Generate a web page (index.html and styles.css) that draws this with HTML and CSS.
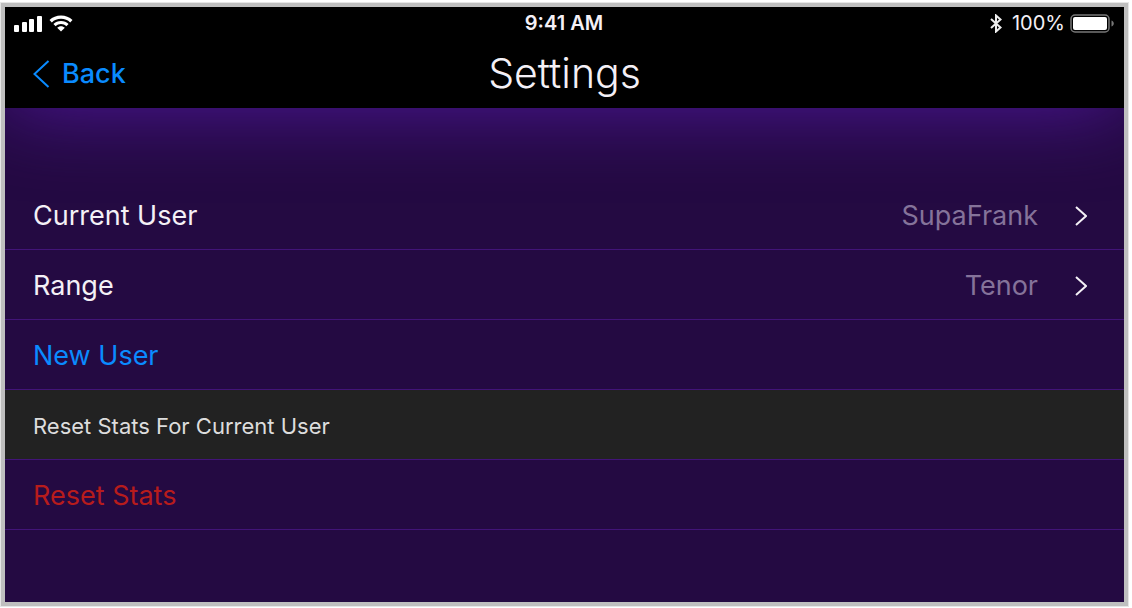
FILE: index.html
```html
<!DOCTYPE html>
<html lang="en">
<head>
<meta charset="utf-8">
<meta name="viewport" content="width=device-width, initial-scale=1">
<title>Settings</title>
<link rel="stylesheet" href="styles.css">
</head>
<body>
<div class="device">
  <header class="header">
    <div class="status">
      <div class="status-side">
        <svg class="signal" viewBox="0 0 28 17" aria-hidden="true"><rect x="0" y="10" width="5" height="7" rx="1"/><rect x="8" y="7" width="5" height="10" rx="1"/><rect x="15" y="4" width="5" height="13" rx="1"/><rect x="23" y="1" width="5" height="16" rx="1"/></svg>
        <svg class="wifi" viewBox="0 0 24 17" aria-hidden="true"><path d="M12 0.5C7.5 0.5 3.5 2.2 0.5 5L2.8 7.4C5.2 5 8.4 3.7 12 3.7S18.8 5 21.2 7.4L23.5 5C20.5 2.2 16.500 0.5 12 0.5Z"/><path d="M12 6C9 6 6.300 7.200 4.400 9L6.700 11.300C8.100 9.900 9.900 9.100 12 9.100S15.900 9.900 17.300 11.300L19.600 9C17.700 7.200 15 6 12 6Z"/><path d="M12 11.200C10.500 11.200 9.200 11.800 8.200 12.800L12 16.600L15.800 12.800C14.800 11.800 13.500 11.200 12 11.200Z"/></svg>
      </div>
      <time class="clock">9:41 AM</time>
      <div class="status-side status-right">
        <svg class="bluetooth" viewBox="0 0 12 19" aria-hidden="true"><path d="M1 5L10.500 13.500L6 17.500V1.500L10.500 5.500L1 14"/></svg>
        <span class="percent">100%</span>
        <svg class="battery" viewBox="0 0 44 19" aria-hidden="true"><rect class="battery-shell" x="1" y="1" width="38" height="17" rx="4"/><rect class="battery-level" x="3" y="3" width="34" height="13" rx="2"/><path class="battery-cap" d="M41.500 6.500C44.500 7.500 44.500 11.500 41.500 12.500Z"/></svg>
      </div>
    </div>
    <nav class="navbar">
      <a class="back" href="#"><svg class="back-icon" viewBox="0 0 17 28" aria-hidden="true"><path d="M15.500 1L1.500 14L15.500 27"/></svg>Back</a>
      <h1 class="title">Settings</h1>
    </nav>
  </header>
  <main class="list">
    <button class="row" type="button"><span>Current User</span><span class="value">SupaFrank</span><svg class="chevron" viewBox="0 0 12 20" aria-hidden="true"><path d="M1 1L11 10L1 19"/></svg></button>
    <button class="row" type="button"><span>Range</span><span class="value">Tenor</span><svg class="chevron" viewBox="0 0 12 20" aria-hidden="true"><path d="M1 1L11 10L1 19"/></svg></button>
    <button class="row action" type="button">New User</button>
    <h2 class="row section">Reset Stats For Current User</h2>
    <button class="row danger" type="button">Reset Stats</button>
  </main>
</div>
</body>
</html>
```
FILE: styles.css
```css
* { box-sizing: border-box; }

body {
  margin: 0;
  padding: 3px 4px 2px 1px;
  background: #fff;
  color: #f4f0f6;
  font-family: Inter, "Liberation Sans", sans-serif;
}

.device {
  min-height: calc(100vh - 5px);
  overflow: hidden;
  border: 4px solid #bfbfbf;
  background: #240a42;
  box-shadow: 0 0 0 1px #e6e6e6;
}

.header {
  background: #000;
  box-shadow: 0 0 80px #4e169a;
}

.status {
  display: grid;
  grid-template-columns: 1fr auto 1fr;
  align-items: center;
  height: 32px;
  padding: 0 10px 0 9px;
}

.status-side {
  display: flex;
  align-items: center;
  gap: 7px;
}

.status-right { gap: 5px; justify-content: flex-end; }

.signal { width: 28px; height: 17px; fill: #fff; }
.wifi { width: 24px; height: 17px; fill: #fff; }
.clock { font-size: 20px; font-weight: 600; line-height: 24px; }
.percent { margin-left: 5px; font-size: 20px; line-height: 24px; }

.bluetooth {
  width: 12px;
  height: 19px;
  fill: none;
  stroke: #eee;
  stroke-width: 2;
}

.battery { width: 44px; height: 19px; }
.battery-shell { fill: none; stroke: #777; stroke-width: 1.5; }
.battery-level { fill: #fff; }
.battery-cap { fill: #777; }

.navbar {
  display: grid;
  grid-template-columns: 1fr auto 1fr;
  align-items: center;
  height: 69px;
  padding: 0 28px;
}

.back {
  display: flex;
  align-items: center;
  gap: 12px;
  color: #0a8bff;
  font-size: 27px;
  font-weight: 500;
  line-height: 32px;
  text-decoration: none;
}

.back-icon {
  width: 17px;
  height: 28px;
  fill: none;
  stroke: currentColor;
  stroke-width: 2;
}

.title {
  margin: 0;
  padding-bottom: 2px;
  font-size: 41px;
  font-weight: 300;
  line-height: 48px;
}

.list { padding-top: 72px; }

.row {
  display: flex;
  align-items: center;
  width: 100%;
  height: 70px;
  margin: 0;
  padding: 2px 37px 0 28px;
  border: 0;
  border-bottom: 1px solid #421478;
  background: none;
  color: inherit;
  font: 400 27px/32px Inter, "Liberation Sans", sans-serif;
  text-align: left;
}

.value { margin-left: auto; color: #85739a; }

.chevron {
  width: 12px;
  height: 20px;
  margin-left: 37px;
  fill: none;
  stroke: #f4f0f6;
  stroke-width: 2;
}

.action { color: #0a8bff; }
.section { background: #222; color: #ddd; font-size: 22px; }
.danger { color: #b71c1c; }
```
